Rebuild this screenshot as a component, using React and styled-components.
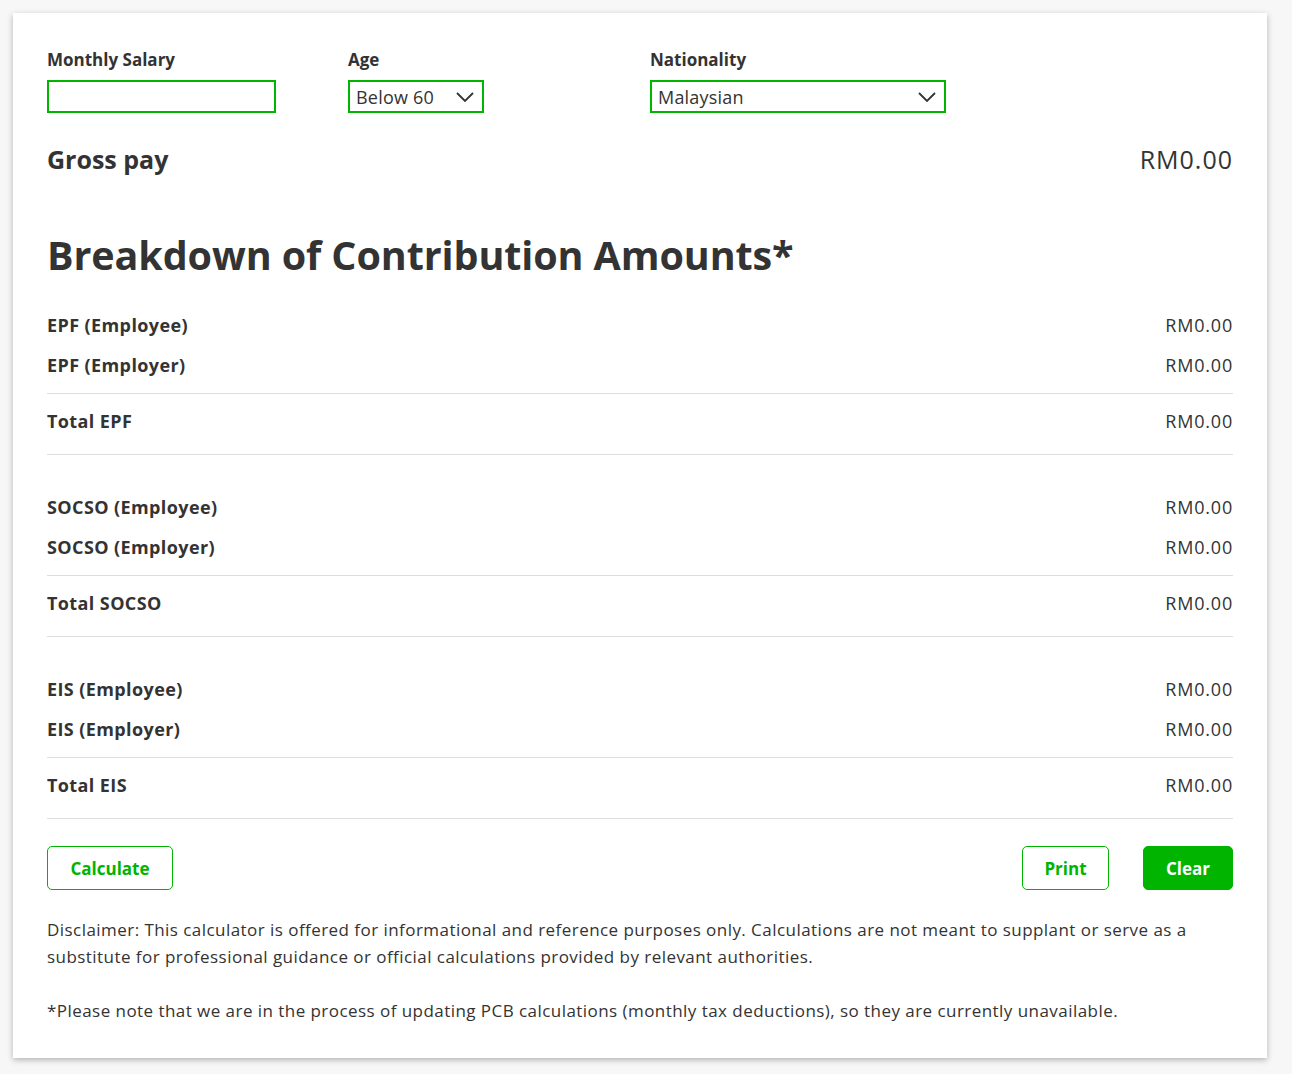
import styled, { createGlobalStyle } from "styled-components";

const GREEN = "#00b400";

const Global = createGlobalStyle`
  body {
    margin: 0;
    background: #f7f7f7;
    font-family: "Open Sans", "Noto Sans", sans-serif;
    color: #333;
  }
`;

const Page = styled.div`
  padding: 13px 25px 16px 13px;
`;

const Card = styled.div`
  background: #fff;
  box-shadow: 0 2px 6px rgba(0, 0, 0, 0.28);
  padding: 36px 34px 34px;
`;

const Fields = styled.div`
  display: grid;
  grid-template-columns: 301px 302px 301px;
`;

const Field = styled.div`
  display: flex;
  flex-direction: column;
  gap: 9px;
`;

const Label = styled.label`
  font-size: 17px;
  font-weight: 700;
  line-height: 22px;
`;

const InputBox = styled.input`
  box-sizing: border-box;
  width: ${(p) => p.w}px;
  height: 33px;
  border: 2px solid ${GREEN};
  outline: none;
  font: inherit;
  padding: 0 6px;
`;

const SelectBox = styled.div`
  box-sizing: border-box;
  width: ${(p) => p.w}px;
  height: 33px;
  border: 2px solid ${GREEN};
  display: flex;
  align-items: center;
  justify-content: space-between;
  padding: 0 8px 0 6px;
  font-size: 18px;
  letter-spacing: 0.2px;
  color: #333;
`;

const GrossRow = styled.div`
  display: flex;
  justify-content: space-between;
  align-items: center;
  margin-top: 30px;
  font-size: 25px;
  line-height: 32px;
`;

const GrossLabel = styled.span`
  font-weight: 700;
`;

const GrossValue = styled.span`
  letter-spacing: 1px;
`;

const Heading = styled.h2`
  font-size: 39.5px;
  font-weight: 700;
  margin: 56px 0 26px;
  line-height: 48px;
  letter-spacing: -0.1px;
`;

const Group = styled.div`
  border-bottom: 1px solid #ddd;
  padding: ${(p) => (p.first ? "0" : "32px")} 0 0;
`;

const Row = styled.div`
  display: flex;
  justify-content: space-between;
  align-items: center;
  height: 40px;
  font-size: 18px;
  letter-spacing: 0.4px;
`;

const RowLabel = styled.span`
  font-weight: 700;
`;

const Amount = styled.span`
  letter-spacing: 0.8px;
`;

const TotalRow = styled(Row)`
  border-top: 1px solid #ddd;
  margin-top: 8px;
  height: 61px;
  padding-bottom: 7px;
  box-sizing: border-box;
`;

const Actions = styled.div`
  display: flex;
  align-items: center;
  margin-top: 27px;
  gap: 34px;
`;

const Button = styled.button`
  height: 44px;
  width: ${(p) => p.w}px;
  border-radius: 5px;
  border: 1px solid ${GREEN};
  background: ${(p) => (p.solid ? GREEN : "#fff")};
  color: ${(p) => (p.solid ? "#fff" : GREEN)};
  font-family: inherit;
  font-size: 17px;
  font-weight: 700;
  cursor: pointer;
  margin-left: ${(p) => (p.push ? "auto" : "0")};
`;

const Note = styled.p`
  font-size: 17px;
  line-height: 27px;
  letter-spacing: 0.45px;
  margin: ${(p) => p.m};
`;

const Chevron = () => (
  <svg width="18" height="10" viewBox="0 0 18 10" fill="none">
    <path d="M1 1l8 8 8-8" stroke="#333" strokeWidth="1.8" />
  </svg>
);

const groups = [
  ["EPF", "Total EPF"],
  ["SOCSO", "Total SOCSO"],
  ["EIS", "Total EIS"],
];

export default function App() {
  return (
    <Page>
      <Global />
      <Card>
        <Fields>
          <Field>
            <Label>Monthly Salary</Label>
            <InputBox w={229} />
          </Field>
          <Field>
            <Label>Age</Label>
            <SelectBox w={136}>
              <span>Below 60</span>
              <Chevron />
            </SelectBox>
          </Field>
          <Field>
            <Label>Nationality</Label>
            <SelectBox w={296}>
              <span>Malaysian</span>
              <Chevron />
            </SelectBox>
          </Field>
        </Fields>

        <GrossRow>
          <GrossLabel>Gross pay</GrossLabel>
          <GrossValue>RM0.00</GrossValue>
        </GrossRow>

        <Heading>Breakdown of Contribution Amounts*</Heading>

        {groups.map(([name, total], i) => (
          <Group key={name} first={i === 0}>
            <Row>
              <RowLabel>{name} (Employee)</RowLabel>
              <Amount>RM0.00</Amount>
            </Row>
            <Row>
              <RowLabel>{name} (Employer)</RowLabel>
              <Amount>RM0.00</Amount>
            </Row>
            <TotalRow>
              <RowLabel>{total}</RowLabel>
              <Amount>RM0.00</Amount>
            </TotalRow>
          </Group>
        ))}

        <Actions>
          <Button w={126}>Calculate</Button>
          <Button w={87} push>Print</Button>
          <Button w={90} solid>Clear</Button>
        </Actions>

        <Note m="26px 0 0">
          Disclaimer: This calculator is offered for informational and reference purposes only. Calculations are not meant to supplant or serve as a substitute for professional guidance or official calculations provided by relevant authorities.
        </Note>
        <Note m="27px 0 0">
          *Please note that we are in the process of updating PCB calculations (monthly tax deductions), so they are currently unavailable.
        </Note>
      </Card>
    </Page>
  );
}
